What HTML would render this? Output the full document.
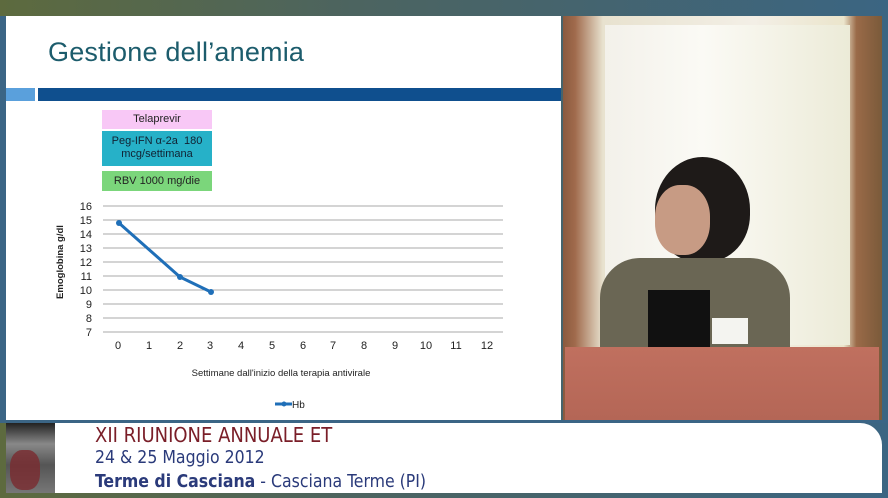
<!DOCTYPE html><html><head><style>
body{margin:0;width:888px;height:498px;overflow:hidden;background:linear-gradient(90deg,#5d6a3e 0%,#4c6460 40%,#3b6582 100%);position:relative;font-family:"Liberation Sans",sans-serif}
div{position:absolute}
.f{font-family:'DejaVu Sans Condensed','Liberation Sans',sans-serif;white-space:nowrap}
</style></head><body>
<div style="left:0;top:16px;width:6px;height:404px;background:#3b6585"></div>
<div style="left:6px;top:16px;width:555px;height:404px;background:#fff"></div>
<div style="left:48px;top:37px;font-size:27px;color:#1c5c6c;letter-spacing:0.2px">Gestione dell’anemia</div>
<div style="left:6px;top:88px;width:29px;height:13px;background:#5aa0dc"></div>
<div style="left:38px;top:88px;width:523px;height:13px;background:#0f4f8e"></div>
<div style="left:102px;top:110px;width:110px;height:19px;background:#f8c8f6;font-size:11px;text-align:center;line-height:19px;color:#222">Telaprevir</div>
<div style="left:102px;top:131px;width:110px;height:35px;background:#26b1c8;font-size:11px;text-align:center;line-height:13px;padding-top:4px;box-sizing:border-box;color:#123">Peg-IFN α-2a&nbsp; 180<br>mcg/settimana</div>
<div style="left:102px;top:171px;width:110px;height:20px;background:#7bd67b;font-size:11px;text-align:center;line-height:20px;color:#222">RBV 1000 mg/die</div>
<svg style="position:absolute;left:0;top:0" width="561" height="420">
<g stroke="#aaa" stroke-width="1">
<line x1="103" x2="503" y1="206" y2="206"/><line x1="103" x2="503" y1="220" y2="220"/><line x1="103" x2="503" y1="234" y2="234"/><line x1="103" x2="503" y1="248" y2="248"/><line x1="103" x2="503" y1="262" y2="262"/><line x1="103" x2="503" y1="276" y2="276"/><line x1="103" x2="503" y1="290" y2="290"/><line x1="103" x2="503" y1="304" y2="304"/><line x1="103" x2="503" y1="318" y2="318"/><line x1="103" x2="503" y1="332" y2="332"/>
</g>
<g font-size="11" fill="#222" text-anchor="end" font-family="Liberation Sans">
<text x="92" y="210">16</text><text x="92" y="224">15</text><text x="92" y="238">14</text><text x="92" y="252">13</text><text x="92" y="266">12</text><text x="92" y="280">11</text><text x="92" y="294">10</text><text x="92" y="308">9</text><text x="92" y="322">8</text><text x="92" y="336">7</text>
</g>
<g font-size="11" fill="#222" text-anchor="middle" font-family="Liberation Sans">
<text x="118" y="349">0</text><text x="149" y="349">1</text><text x="180" y="349">2</text><text x="210" y="349">3</text><text x="241" y="349">4</text><text x="272" y="349">5</text><text x="303" y="349">6</text><text x="333" y="349">7</text><text x="364" y="349">8</text><text x="395" y="349">9</text><text x="426" y="349">10</text><text x="456" y="349">11</text><text x="487" y="349">12</text>
<text x="281" y="376" font-size="9.5">Settimane dall'inizio della terapia antivirale</text>
</g>
<text transform="translate(63,262) rotate(-90)" font-size="9.5" font-weight="bold" text-anchor="middle" fill="#222" font-family="Liberation Sans">Emoglobina g/dl</text>
<polyline points="119,223 180,277 211,292" fill="none" stroke="#1f6fb8" stroke-width="3"/>
<g fill="#1f6fb8"><circle cx="119" cy="223" r="3"/><circle cx="180" cy="277" r="3"/><circle cx="211" cy="292" r="3"/>
<line x1="275" x2="292" y1="404" y2="404" stroke="#1f6fb8" stroke-width="3"/><circle cx="284" cy="404" r="2.5"/></g>
<text x="292" y="408" font-size="10" fill="#222" font-family="Liberation Sans">Hb</text>
</svg>
<div style="left:563px;top:16px;width:319px;height:404px;background:linear-gradient(90deg,#8a5a3f 0,#a06a4c 12px,#e8e2cf 40px,#f3efe6 60%,#ebe5cc 88%,#9a6a48 92%,#7a5a3a 100%)"></div>
<div style="left:605px;top:25px;width:245px;height:320px;background:linear-gradient(90deg,#f3f1ea,#fbfaf5 40%,#ecebd8)"></div>
<div style="left:655px;top:157px;width:95px;height:105px;background:#1e1a18;border-radius:50% 50% 45% 45%"></div>
<div style="left:655px;top:185px;width:55px;height:70px;background:#c79b84;border-radius:45%"></div>
<div style="left:600px;top:258px;width:190px;height:92px;background:#6a6654;border-radius:40px 40px 0 0"></div>
<div style="left:648px;top:290px;width:62px;height:60px;background:#111"></div>
<div style="left:712px;top:318px;width:36px;height:26px;background:#f4f4f0"></div>
<div style="left:565px;top:347px;width:314px;height:73px;background:linear-gradient(180deg,#c0705f,#b46656)"></div>
<div style="left:0;top:420px;width:888px;height:3px;background:#3b6585"></div>
<div style="left:6px;top:423px;width:876px;height:70px;background:#fff;border-radius:0 22px 0 0"></div>
<div style="left:6px;top:423px;width:49px;height:70px;background:linear-gradient(180deg,#222 0,#888 30%,#555 60%,#777 100%)"></div>
<div style="left:10px;top:450px;width:30px;height:40px;background:#7a2a30;border-radius:40%;opacity:.8"></div>
<div class="f" style="left:95px;top:423px;font-size:20px;color:#7a1e28">XII RIUNIONE ANNUALE ET</div>
<div class="f" style="left:95px;top:448px;font-size:17.5px;color:#2a3a7a">24 &amp; 25 Maggio 2012</div>
<div class="f" style="left:95px;top:472px;font-size:17.5px;color:#2a3a7a"><b>Terme di Casciana</b> - Casciana Terme (PI)</div>
</body></html>
